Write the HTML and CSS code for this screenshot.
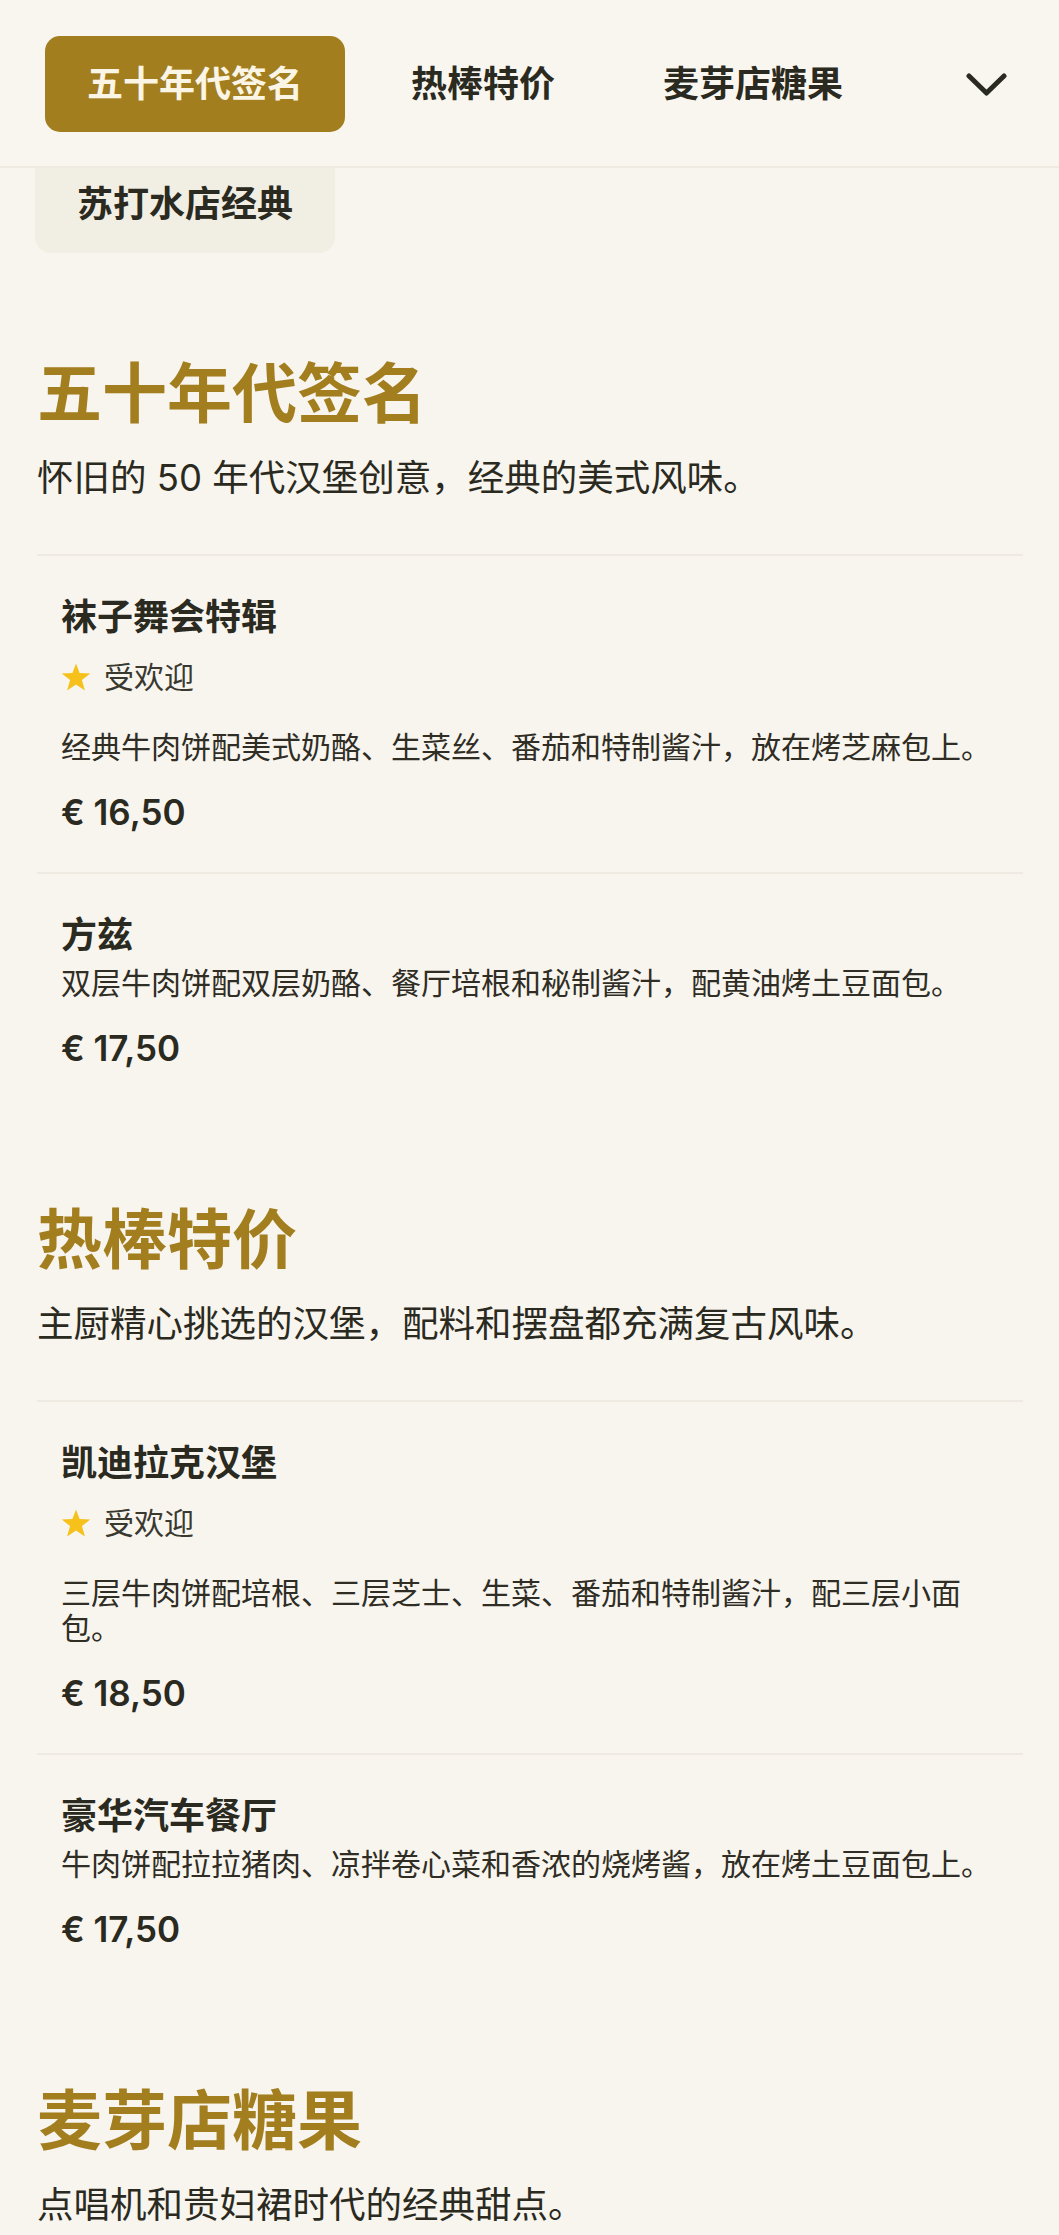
FILE: index.html
```html
<!DOCTYPE html>
<html lang="zh-CN">
<head>
<meta charset="utf-8">
<title>菜单</title>
<link rel="stylesheet" href="styles.css">
</head>
<body>
<header class="topbar">
  <nav class="tabs">
    <a class="tab tab-active">五十年代签名</a>
    <a class="tab">热棒特价</a>
    <a class="tab">麦芽店糖果</a>
  </nav>
  <button class="more" aria-label="更多">
    <svg class="chevron" width="41" height="23" viewBox="0 0 41 23"><polyline points="3,3 20.5,20 38,3" fill="none" stroke="#2b2a20" stroke-width="5" stroke-linecap="round" stroke-linejoin="round"/></svg>
  </button>
</header>
<div class="subnav">
  <a class="tab-pill">苏打水店经典</a>
</div>
<main class="menu">
  <section class="section">
    <h2 class="section-title">五十年代签名</h2>
    <p class="section-desc">怀旧的 50 年代汉堡创意，经典的美式风味。</p>
    <ul class="items">
      <li class="item">
        <h3 class="item-name">袜子舞会特辑</h3>
        <div class="badge"><svg class="star" width="30" height="28" viewBox="0 0 30 28"><path d="M15 0.5 L18.6 10 L29.3 10.4 L20.9 17 L23.9 27.5 L15 21.4 L6.1 27.5 L9.1 17 L0.7 10.4 L11.4 10 Z" fill="#f5c11a"/></svg><span>受欢迎</span></div>
        <p class="item-desc">经典牛肉饼配美式奶酪、生菜丝、番茄和特制酱汁，放在烤芝麻包上。</p>
        <div class="item-price">€ 16,50</div>
      </li>
      <li class="item">
        <h3 class="item-name">方兹</h3>
        <p class="item-desc">双层牛肉饼配双层奶酪、餐厅培根和秘制酱汁，配黄油烤土豆面包。</p>
        <div class="item-price">€ 17,50</div>
      </li>
    </ul>
  </section>
  <section class="section">
    <h2 class="section-title">热棒特价</h2>
    <p class="section-desc">主厨精心挑选的汉堡，配料和摆盘都充满复古风味。</p>
    <ul class="items">
      <li class="item">
        <h3 class="item-name">凯迪拉克汉堡</h3>
        <div class="badge"><svg class="star" width="30" height="28" viewBox="0 0 30 28"><path d="M15 0.5 L18.6 10 L29.3 10.4 L20.9 17 L23.9 27.5 L15 21.4 L6.1 27.5 L9.1 17 L0.7 10.4 L11.4 10 Z" fill="#f5c11a"/></svg><span>受欢迎</span></div>
        <p class="item-desc">三层牛肉饼配培根、三层芝士、生菜、番茄和特制酱汁，配三层小面包。</p>
        <div class="item-price">€ 18,50</div>
      </li>
      <li class="item">
        <h3 class="item-name">豪华汽车餐厅</h3>
        <p class="item-desc">牛肉饼配拉拉猪肉、凉拌卷心菜和香浓的烧烤酱，放在烤土豆面包上。</p>
        <div class="item-price">€ 17,50</div>
      </li>
    </ul>
  </section>
  <section class="section">
    <h2 class="section-title">麦芽店糖果</h2>
    <p class="section-desc">点唱机和贵妇裙时代的经典甜点。</p>
  </section>
</main>
</body>
</html>
```

FILE: styles.css
```css
html, body {
  margin: 0;
  padding: 0;
  background: #f8f5ef;
}

body {
  font-family: "Inter", "Noto Sans CJK SC", sans-serif;
  color: #2b2a20;
}

.topbar {
  box-sizing: border-box;
  height: 168px;
  display: flex;
  align-items: flex-start;
  padding: 36px 52px 0 45px;
  background: #f9f6f0;
  border-bottom: 2px solid #efebe3;
}

.tabs {
  display: flex;
  gap: 24px;
}

.tab,
.tab-pill {
  display: block;
  padding: 0 42px;
  font-size: 36px;
  font-weight: 600;
  color: #2b2a20;
  white-space: nowrap;
}

.tab {
  height: 96px;
  line-height: 96px;
  border-radius: 15px;
}

.tab-active {
  background: #a27e1f;
  color: #fbf5e6;
}

.more {
  margin-left: auto;
  height: 96px;
  display: flex;
  align-items: center;
  padding: 0;
  border: 0;
  background: none;
}

.chevron {
  display: block;
}

.subnav {
  display: flex;
  padding-left: 35px;
}

.tab-pill {
  width: 216px;
  padding-top: 14px;
  padding-bottom: 27px;
  line-height: 44px;
  background: #f1eee4;
  border-radius: 0 0 16px 16px;
}

.menu {
  padding: 9px 36px 0 37px;
}

.section {
  padding-top: 93px;
}

.section-title {
  margin: 0;
  font-size: 65px;
  line-height: 78px;
  font-weight: 700;
  color: #a27e1f;
}

.section-desc {
  margin: 21px 0 0;
  font-size: 36.5px;
  line-height: 48px;
  font-weight: 400;
  color: #2b2a20;
}

.items {
  list-style: none;
  margin: 52px 0 0;
  padding: 0;
}

.item {
  border-top: 2px solid #eeeae1;
  padding: 39px 24px 40px;
}

.item-name {
  margin: 0;
  font-size: 36px;
  line-height: 44px;
  font-weight: 700;
  color: #2b2a20;
}

.badge {
  display: flex;
  align-items: center;
  gap: 13px;
  margin-top: 20px;
  height: 36px;
  font-size: 30px;
  line-height: 36px;
  color: #3a392f;
}

.star {
  display: block;
  flex: none;
}

.item-desc {
  margin: 9px 0 0;
  font-size: 30px;
  line-height: 35px;
  color: #2f2d24;
}

.badge + .item-desc {
  margin-top: 35px;
}

.item-price {
  margin-top: 27px;
  font-size: 35px;
  line-height: 40px;
  font-weight: 600;
  color: #2b2a20;
}
```
